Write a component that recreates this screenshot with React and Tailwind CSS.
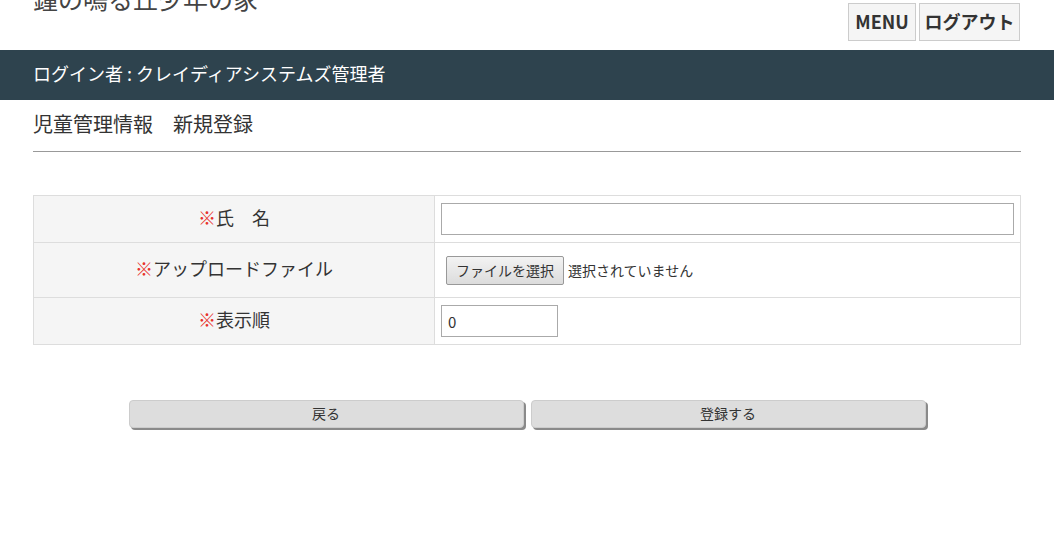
import React from 'react';

const jp = 'font-["Meiryo","Noto_Sans_CJK_JP","Noto_Sans",sans-serif]';

const Required = () => <span className="text-[#e8322b]">※</span>;

const rows = [
  { label: '氏　名', kind: 'name' },
  { label: 'アップロードファイル', kind: 'file' },
  { label: '表示順', kind: 'order' },
];

export default function App() {
  return (
    <div className={`${jp} min-h-[542px] bg-white text-[#333]`}>
      {/* ヘッダー */}
      <header className="flex h-[50px] items-start justify-between px-[33px]">
        <h1 className="-mt-[19px] text-[25px] leading-[34px] text-[#444]">鐘の鳴る丘少年の家</h1>
        <div className="mt-[3px] mr-[1px] flex gap-[3px]">
          <button className="h-[38px] w-[68px] border border-[#ccc] bg-[#f5f5f5] pb-[2px] text-[18px] font-bold text-[#333]">MENU</button>
          <button className="h-[38px] w-[101px] border border-[#ccc] bg-[#f5f5f5] pb-[2px] text-[18px] font-bold text-[#333]">ログアウト</button>
        </div>
      </header>

      <div className="flex h-[50px] items-center bg-[#2e434e] px-[33px] pb-[3px] text-[18px] text-white">
        ログイン者 : クレイディアシステムズ管理者
      </div>

      <main className="px-[33px]">
        <h2 className="pt-[11px] pb-[14px] text-[20px] leading-[26px]">児童管理情報　新規登録</h2>
        <hr className="border-t border-[#999]" />

        <table className="mt-[43px] w-full border-collapse text-[14px]">
          <tbody>
            {rows.map((r) => (
              <tr key={r.kind} className={r.kind === 'file' ? 'h-[55px]' : 'h-[47px]'}>
                <th className="w-[401px] border border-[#ddd] bg-[#f5f5f5] pb-[3px] text-center text-[18px] font-normal">
                  <Required />
                  {r.label}
                </th>
                <td className="border border-[#ddd] px-[6px]">
                  {r.kind === 'name' && (
                    <input type="text" className="h-[32px] w-full border border-[#aaa] px-[6px] outline-none" />
                  )}
                  {r.kind === 'file' && (
                    <div className="flex items-center gap-[4px] pl-[5px]">
                      <span className="rounded-[2px] border border-[#999] bg-gradient-to-b from-[#f3f3f3] to-[#dcdcdc] px-[9px] py-[3px] text-[14px]">
                        ファイルを選択
                      </span>
                      <span className="text-[14px]">選択されていません</span>
                    </div>
                  )}
                  {r.kind === 'order' && (
                    <input type="text" defaultValue="0" className="h-[32px] w-[117px] border border-[#aaa] px-[6px] text-[15px] outline-none" />
                  )}
                </td>
              </tr>
            ))}
          </tbody>
        </table>

        <div className="mx-auto mt-[55px] flex w-[797px] gap-[7px]">
          <button className="h-[28px] flex-1 rounded-[4px] border border-[#ccc] bg-[#ddd] pb-[2px] text-[14px] shadow-[2px_2px_0_#8a8a8a]">戻る</button>
          <button className="h-[28px] flex-1 rounded-[4px] border border-[#ccc] bg-[#ddd] pb-[2px] text-[14px] shadow-[2px_2px_0_#8a8a8a]">登録する</button>
        </div>
      </main>
    </div>
  );
}
